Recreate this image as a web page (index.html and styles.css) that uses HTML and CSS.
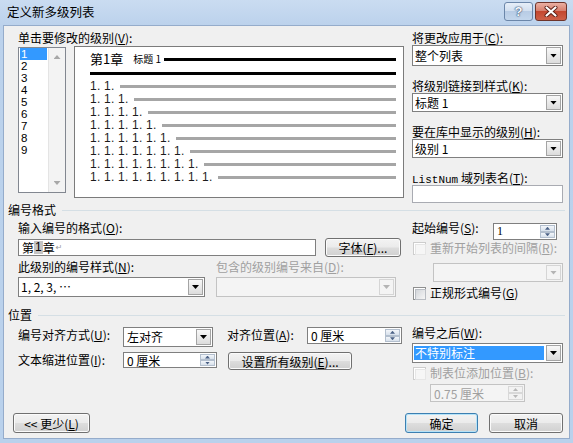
FILE: index.html
```html
<!DOCTYPE html>
<html lang="zh-CN">
<head>
  <meta charset="UTF-8">
  <meta name="viewport" content="width=device-width, initial-scale=1.0">
  <title>定义新多级列表</title>
  <link rel="stylesheet" href="styles.css">
</head>
<body>
  <div class="window">
    <div class="titlebar">
      <span class="title">定义新多级列表</span>
      <span class="cap-btn help">?</span>
      <span class="cap-btn close">
        <svg width="14" height="11" viewBox="0 0 14 11">
          <path d="M2.5 1.5 L11.5 9.5 M11.5 1.5 L2.5 9.5" stroke="#5b1f16" stroke-width="4" stroke-linecap="round"/>
          <path d="M2.5 1.5 L11.5 9.5 M11.5 1.5 L2.5 9.5" stroke="#ffffff" stroke-width="2.2" stroke-linecap="round"/>
        </svg>
      </span>
    </div>

    <div class="client">
      <!-- 级别选择与预览 -->
      <div class="top">
        <div class="levels">
          <div class="label">单击要修改的级别(<u>V</u>):</div>
          <div class="levels-row">
            <div class="listbox">
              <div class="items">
                <div class="item selected">1</div>
                <div class="item">2</div>
                <div class="item">3</div>
                <div class="item">4</div>
                <div class="item">5</div>
                <div class="item">6</div>
                <div class="item">7</div>
                <div class="item">8</div>
                <div class="item">9</div>
              </div>
              <div class="vscroll">
                <span class="arrow up"></span>
                <span class="arrow down"></span>
              </div>
            </div>
            <div class="preview">
              <div class="pv-head">
                <span class="pv-chapter">第1章</span>
                <span class="pv-style">标题 1</span>
                <span class="pv-rule"></span>
              </div>
              <div class="pv-heavy"></div>
              <div class="pv-row first"><span class="pv-num">1. 1.</span><span class="pv-bar"></span></div>
              <div class="pv-row"><span class="pv-num">1. 1. 1.</span><span class="pv-bar"></span></div>
              <div class="pv-row"><span class="pv-num">1. 1. 1. 1.</span><span class="pv-bar"></span></div>
              <div class="pv-row"><span class="pv-num">1. 1. 1. 1. 1.</span><span class="pv-bar"></span></div>
              <div class="pv-row"><span class="pv-num">1. 1. 1. 1. 1. 1.</span><span class="pv-bar"></span></div>
              <div class="pv-row"><span class="pv-num">1. 1. 1. 1. 1. 1. 1.</span><span class="pv-bar"></span></div>
              <div class="pv-row"><span class="pv-num">1. 1. 1. 1. 1. 1. 1. 1.</span><span class="pv-bar"></span></div>
              <div class="pv-row"><span class="pv-num">1. 1. 1. 1. 1. 1. 1. 1. 1.</span><span class="pv-bar"></span></div>
            </div>
          </div>
        </div>

        <div class="side">
          <div class="label">将更改应用于(<u>C</u>):</div>
          <div class="combo tall"><span class="value">整个列表</span><span class="drop"></span></div>
          <div class="label gap">将级别链接到样式(<u>K</u>):</div>
          <div class="combo"><span class="value">标题 1</span><span class="drop"></span></div>
          <div class="label gap">要在库中显示的级别(<u>H</u>):</div>
          <div class="combo"><span class="value">级别 1</span><span class="drop"></span></div>
          <div class="label gap"><span class="mono">ListNum</span> 域列表名(<u>T</u>):</div>
          <div class="textbox"></div>
        </div>
      </div>

      <!-- 编号格式 -->
      <div class="group-head">编号格式</div>
      <div class="format">
        <div class="fmt-left">
          <div class="label first">输入编号的格式(<u>O</u>):</div>
          <div class="row fmt-row1">
            <div class="input">第<span class="hl">1</span>章<span class="para">↵</span></div>
            <div class="button font-btn">字体(<u>F</u>)...</div>
          </div>
          <div class="row fmt-labels">
            <div class="label style-label">此级别的编号样式(<u>N</u>):</div>
            <div class="label disabled">包含的级别编号来自(<u>D</u>):</div>
          </div>
          <div class="row fmt-combos">
            <div class="combo style-combo"><span class="value">1, 2, 3, …</span><span class="drop"></span></div>
            <div class="combo disabled include-combo"><span class="value"></span><span class="drop"></span></div>
          </div>
        </div>

        <div class="fmt-right">
          <div class="row start-row">
            <div class="label start-label">起始编号(<u>S</u>):</div>
            <div class="spinner start-spin">
              <span class="spin-value">1</span>
              <span class="spin-btns"><span><i class="tri-up"></i></span><span><i class="tri-down"></i></span></span>
            </div>
          </div>
          <div class="check-row disabled">
            <span class="checkbox"></span>
            <span>重新开始列表的间隔(<u>R</u>):</span>
          </div>
          <div class="combo disabled restart-combo"><span class="value"></span><span class="drop"></span></div>
          <div class="check-row legal">
            <span class="checkbox"></span>
            <span>正规形式编号(<u>G</u>)</span>
          </div>
        </div>
      </div>

      <!-- 位置 -->
      <div class="group-head">位置</div>
      <div class="position">
        <div class="pos-left">
          <div class="row pos-row1">
            <div class="label pos-label">编号对齐方式(<u>U</u>):</div>
            <div class="combo align-combo"><span class="value">左对齐</span><span class="drop"></span></div>
            <div class="label at-label">对齐位置(<u>A</u>):</div>
            <div class="spinner at-spin">
              <span class="spin-value">0 厘米</span>
              <span class="spin-btns"><span><i class="tri-up"></i></span><span><i class="tri-down"></i></span></span>
            </div>
          </div>
          <div class="row pos-row2">
            <div class="label pos-label">文本缩进位置(<u>I</u>):</div>
            <div class="spinner indent-spin">
              <span class="spin-value">0 厘米</span>
              <span class="spin-btns"><span><i class="tri-up"></i></span><span><i class="tri-down"></i></span></span>
            </div>
            <div class="button all-btn">设置所有级别(<u>E</u>)...</div>
          </div>
        </div>

        <div class="pos-right">
          <div class="label after-label">编号之后(<u>W</u>):</div>
          <div class="combo after-combo"><span class="value selected">不特别标注</span><span class="drop"></span></div>
          <div class="check-row disabled tab-row">
            <span class="checkbox"></span>
            <span>制表位添加位置(<u>B</u>):</span>
          </div>
          <div class="spinner disabled tab-spin">
            <span class="spin-value">0.75 厘米</span>
            <span class="spin-btns"><span><i class="tri-up"></i></span><span><i class="tri-down"></i></span></span>
          </div>
        </div>
      </div>

      <div class="footer">
        <div class="button less-btn">&lt;&lt; 更少(<u>L</u>)</div>
        <div class="button default ok-btn">确定</div>
        <div class="button cancel-btn">取消</div>
      </div>
    </div>
  </div>
</body>
</html>
```

FILE: styles.css
```css
* {
  box-sizing: border-box;
}
html, body {
  margin: 0;
}
body {
  width: 573px;
  height: 443px;
  overflow: hidden;
  font-family: "Noto Sans CJK SC", "Liberation Sans", sans-serif;
  font-size: 12px;
  color: #000;
}
u {
  text-underline-offset: 1px;
}

/* 窗口框架 */
.window {
  width: 573px;
  height: 443px;
  display: flex;
  flex-direction: column;
  padding: 0 3px 4px;
  background: linear-gradient(#cadcf1, #bcd2ec 25px, #b9d1ec);
}
.titlebar {
  height: 25px;
  display: flex;
  align-items: flex-start;
}
.title {
  margin: 4px 0 0 4px;
  line-height: 16px;
  font-size: 12.5px;
}
.cap-btn {
  margin-top: 2px;
  height: 19px;
  border-radius: 3px;
  display: flex;
  align-items: center;
  justify-content: center;
}
.help {
  margin-left: auto;
  width: 29px;
  border: 1px solid #6b86a9;
  background: linear-gradient(#e6eef8, #d3e0f0 45%, #b8cce5 50%, #c3d6ec);
  font-family: "Liberation Sans", sans-serif;
  font-weight: bold;
  font-size: 13px;
  color: #f7f9fc;
  text-shadow: 0 0 1px #3d577a, 0 0 1px #3d577a, 0 0 2px #3d577a;
}
.close {
  margin-left: 2px;
  margin-right: 3px;
  width: 32px;
  border: 1px solid #6e342b;
  background: linear-gradient(#eab0a3, #d7806f 45%, #c4472f 50%, #cd6048);
}

.client {
  flex: 1;
  display: flex;
  flex-direction: column;
  background: #f0f0f0;
  border: 1px solid #95accb;
  padding-left: 4px;
}

.label {
  height: 14px;
  line-height: 14px;
  white-space: nowrap;
}
.disabled,
.label.disabled {
  color: #a0a0a0;
}
.mono {
  font-family: "Liberation Mono", monospace;
  font-size: 11px;
}
.row {
  display: flex;
  align-items: flex-start;
}

/* 上部 */
.top {
  margin-top: 5px;
  height: 172px;
  display: flex;
  padding-left: 10px;
}
.levels {
  width: 386px;
}
.levels-row {
  display: flex;
  align-items: flex-start;
  gap: 8px;
  margin-top: 1px;
}
.listbox {
  width: 48px;
  height: 146px;
  margin-top: 1px;
  display: flex;
  border: 1px solid #828790;
  background: #fff;
}
.items {
  flex: 1;
}
.item {
  height: 12px;
  line-height: 12px;
  padding-left: 2px;
  font-family: "Liberation Sans", sans-serif;
  font-size: 11.5px;
  overflow: hidden;
}
.item.selected {
  margin: 0 1px;
  padding-left: 1px;
  background: #3399ff;
  color: #fff;
}
.vscroll {
  width: 17px;
  display: flex;
  flex-direction: column;
  justify-content: space-between;
  align-items: center;
  padding: 7px 0;
  background: #f3f3f3;
  border-left: 1px solid #e4e4e4;
}
.arrow {
  width: 7px;
  height: 4px;
  background: #a8a8a8;
}
.arrow.up {
  clip-path: polygon(50% 0, 100% 100%, 0 100%);
}
.arrow.down {
  clip-path: polygon(0 0, 100% 0, 50% 100%);
}

.preview {
  width: 330px;
  height: 152px;
  border: 1px solid #7b7b7b;
  background: #fff;
  padding: 4px 7px 0 15px;
}
.pv-head {
  height: 16px;
  display: flex;
  align-items: center;
}
.pv-chapter {
  font-size: 13px;
  line-height: 16px;
}
.pv-style {
  margin-left: 10px;
  font-size: 10px;
  line-height: 12px;
}
.pv-rule {
  flex: 1;
  height: 3px;
  margin-left: 3px;
  background: #000;
}
.pv-heavy {
  height: 3px;
  margin-top: 5px;
  background: #000;
}
.pv-row {
  height: 13px;
  display: flex;
  align-items: center;
}
.pv-row.first {
  margin-top: 5px;
}
.pv-num {
  font-family: "Liberation Sans", sans-serif;
  font-size: 12px;
  line-height: 13px;
  letter-spacing: 0.22px;
  white-space: pre;
  color: #1c1c1c;
}
.pv-bar {
  flex: 1;
  height: 3px;
  margin-left: 6px;
  background: #a6a6a6;
}

.side {
  margin-left: 8px;
  width: 152px;
  display: flex;
  flex-direction: column;
}
.side .gap {
  margin-top: 13px;
}

/* 控件 */
.combo {
  width: 151px;
  height: 19px;
  display: flex;
  align-items: center;
  border: 1px solid #7f7f7f;
  background: #fff;
  padding-left: 2px;
  white-space: nowrap;
}
.combo.tall {
  height: 21px;
}
.combo .value {
  flex: 1;
  line-height: 14px;
}
.drop {
  width: 15px;
  align-self: stretch;
  margin: 1px;
  display: flex;
  align-items: center;
  justify-content: center;
  border: 1px solid #a4a4a4;
  background: linear-gradient(#f8f8f8, #dcdcdc);
}
.drop::after {
  content: "";
  width: 7px;
  height: 4px;
  background: #000;
  clip-path: polygon(0 0, 100% 0, 50% 100%);
}
.combo.disabled {
  border-color: #c3c3c3;
  background: #f4f4f4;
}
.combo.disabled .drop {
  border-color: #d5d5d5;
  background: #f4f4f4;
}
.combo.disabled .drop::after {
  background: #b4b4b4;
}
.textbox {
  width: 151px;
  height: 18px;
  border: 1px solid #a9abb2;
  background: #fff;
}
.input {
  width: 298px;
  height: 17px;
  margin-top: 1px;
  display: flex;
  align-items: center;
  padding-left: 3px;
  border: 1px solid #7f7f7f;
  background: #fff;
  line-height: 13px;
}
.hl {
  background: #c4c4c4;
  font-family: "Liberation Sans", sans-serif;
  padding: 0 1px;
}
.para {
  margin-left: 1px;
  font-family: "DejaVu Sans", sans-serif;
  font-size: 8px;
  color: #9a9a9a;
}

.spinner {
  display: flex;
  border: 1px solid #7f7f7f;
  background: #fff;
}
.spin-value {
  flex: 1;
  display: flex;
  align-items: center;
  padding-left: 3px;
  white-space: nowrap;
}
.spin-btns {
  width: 15px;
  margin: 1px;
  display: flex;
  flex-direction: column;
}
.spin-btns span {
  flex: 1;
  display: flex;
  align-items: center;
  justify-content: center;
  border: 1px solid #b3bfce;
  background: linear-gradient(#f3f6fa, #d8e1ec);
}
.spin-btns i {
  width: 5px;
  height: 3px;
  background: #4b6186;
}
.tri-up {
  clip-path: polygon(50% 0, 100% 100%, 0 100%);
}
.tri-down {
  clip-path: polygon(0 0, 100% 0, 50% 100%);
}
.spinner.disabled {
  border-color: #c3c3c3;
  background: #f4f4f4;
}
.spinner.disabled .spin-btns span {
  border-color: #d8d8d8;
  background: #f2f2f2;
}
.spinner.disabled .spin-btns i {
  background: #b8b8b8;
}

.check-row {
  height: 14px;
  display: flex;
  align-items: center;
  white-space: nowrap;
  line-height: 14px;
}
.checkbox {
  width: 13px;
  height: 13px;
  margin: 0 4px 0 1px;
  border: 1px solid #8e8f8f;
  background: #fff;
  padding: 1px;
}
.checkbox::after {
  content: "";
  display: block;
  width: 100%;
  height: 100%;
  border: 1px solid #b9bdc3;
  background: linear-gradient(135deg, #d3d6da, #f6f6f6);
}
.check-row.disabled .checkbox {
  border-color: #cdcdcd;
}
.check-row.disabled .checkbox::after {
  border-color: #e6e6e6;
  background: #f6f6f6;
}

.button {
  display: flex;
  align-items: center;
  justify-content: center;
  white-space: nowrap;
  border: 1px solid #707070;
  border-radius: 3px;
  background: linear-gradient(#f3f3f3, #ebebeb 48%, #dddddd 52%, #d0d0d0);
  box-shadow: inset 0 0 0 1px #fbfbfb;
}
.button.default {
  border-color: #3c7fb1;
  box-shadow: inset 0 0 0 1px #b6e3f8;
}

/* 编号格式 */
.group-head {
  height: 14px;
  line-height: 14px;
  display: flex;
  align-items: center;
  margin-right: 4px;
}
.group-head::after {
  content: "";
  flex: 1;
  margin-left: 6px;
  border-top: 1px solid #d5dfe5;
}
.format {
  height: 91px;
  display: flex;
}
.fmt-left {
  width: 396px;
  padding-left: 10px;
}
.fmt-left .label.first {
  margin-top: 4px;
}
.fmt-row1 {
  margin-top: 3px;
  height: 19px;
}
.font-btn {
  margin-left: 9px;
  width: 76px;
  height: 19px;
}
.fmt-labels {
  margin-top: 3px;
}
.style-label {
  width: 198px;
}
.fmt-combos {
  margin-top: 3px;
}
.style-combo {
  width: 187px;
  height: 20px;
}
.include-combo {
  margin-left: 11px;
  width: 180px;
  height: 20px;
}
.fmt-right {
  margin-left: 8px;
  width: 152px;
}
.start-row {
  margin-top: 4px;
}
.start-label {
  width: 81px;
}
.start-spin {
  margin-top: 2px;
  width: 64px;
  height: 17px;
  font-family: "Liberation Serif", serif;
}
.fmt-right .check-row {
  margin-top: 1px;
}
.restart-combo {
  margin-top: 8px;
  margin-left: 21px;
  width: 130px;
}
.fmt-right .check-row.legal {
  margin-top: 4px;
}

/* 位置 */
.position {
  height: 91px;
  display: flex;
}
.pos-left {
  width: 396px;
  padding-left: 10px;
}
.pos-label {
  width: 105px;
  margin-top: 1px;
}
.pos-row1 {
  margin-top: 5px;
}
.align-combo {
  width: 90px;
  height: 20px;
  padding-left: 3px;
}
.at-label {
  margin: 1px 0 0 14px;
  width: 80px;
}
.at-spin {
  width: 95px;
  height: 17px;
}
.pos-row2 {
  margin-top: 5px;
}
.indent-spin {
  width: 94px;
  height: 16px;
}
.all-btn {
  margin-left: 11px;
  width: 124px;
  height: 18px;
}
.pos-right {
  margin-left: 8px;
  width: 152px;
}
.after-label {
  margin-top: 4px;
}
.after-combo {
  margin-top: 3px;
  height: 20px;
  padding-left: 0;
}
.after-combo .value.selected {
  align-self: stretch;
  margin: 2px 1px;
  padding-left: 1px;
  display: flex;
  align-items: center;
  background: #3399ff;
  color: #fff;
}
.tab-row {
  margin-top: 3px;
}
.tab-spin {
  margin: 4px 0 0 18px;
  width: 95px;
  height: 18px;
}

/* 底部按钮 */
.footer {
  height: 20px;
  display: flex;
  padding: 0 6px 0 5px;
}
.less-btn {
  width: 77px;
}
.ok-btn {
  margin-left: auto;
  width: 73px;
}
.cancel-btn {
  margin-left: 11px;
  width: 74px;
}
```
